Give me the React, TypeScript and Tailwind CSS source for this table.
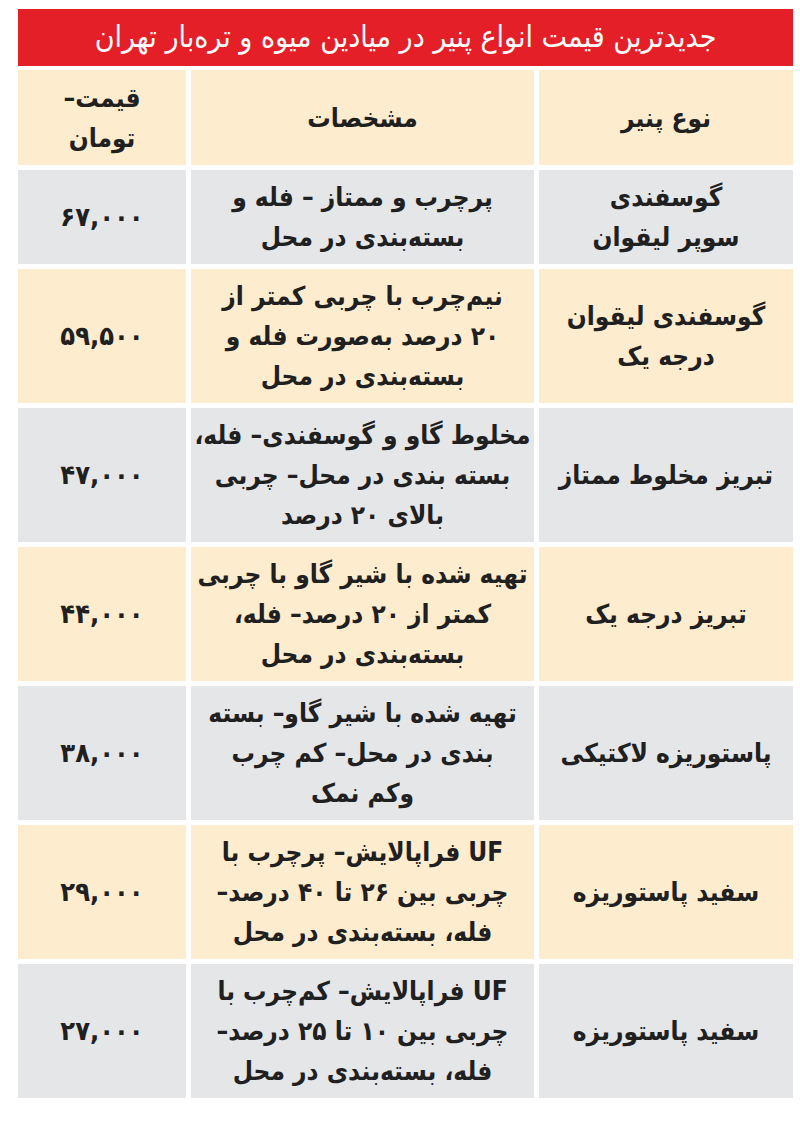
import React from "react";

type Row = {
  name: string[];
  desc: string[];
  price: string;
  tone: "gray" | "cream";
};

const rows: Row[] = [
  {
    name: ["گوسفندی", "سوپر لیقوان"],
    desc: ["پرچرب و ممتاز – فله و", "بسته‌بندی در محل"],
    price: "۶۷,۰۰۰",
    tone: "gray",
  },
  {
    name: ["گوسفندی لیقوان", "درجه یک"],
    desc: ["نیم‌چرب با چربی کمتر از", "۲۰ درصد به‌صورت فله و", "بسته‌بندی در محل"],
    price: "۵۹,۵۰۰",
    tone: "cream",
  },
  {
    name: ["تبریز مخلوط ممتاز"],
    desc: ["مخلوط گاو و گوسفندی– فله،", "بسته بندی در محل– چربی", "بالای ۲۰ درصد"],
    price: "۴۷,۰۰۰",
    tone: "gray",
  },
  {
    name: ["تبریز درجه یک"],
    desc: ["تهیه شده با شیر گاو با چربی", "کمتر از ۲۰ درصد– فله،", "بسته‌بندی در محل"],
    price: "۴۴,۰۰۰",
    tone: "cream",
  },
  {
    name: ["پاستوریزه لاکتیکی"],
    desc: ["تهیه شده با شیر گاو– بسته", "بندی در محل– کم چرب", "وکم نمک"],
    price: "۳۸,۰۰۰",
    tone: "gray",
  },
  {
    name: ["سفید پاستوریزه"],
    desc: ["UF فراپالایش– پرچرب با", "چربی بین ۲۶ تا ۴۰ درصد–", "فله، بسته‌بندی در محل"],
    price: "۲۹,۰۰۰",
    tone: "cream",
  },
  {
    name: ["سفید پاستوریزه"],
    desc: ["UF فراپالایش– کم‌چرب با", "چربی بین ۱۰ تا ۲۵ درصد–", "فله، بسته‌بندی در محل"],
    price: "۲۷,۰۰۰",
    tone: "gray",
  },
];

function Cell({
  lines,
  tone,
  className = "",
}: {
  lines: string[];
  tone: "gray" | "cream";
  className?: string;
}) {
  return (
    <div
      className={`flex flex-col items-center justify-center text-center ${
        tone === "gray" ? "bg-[#e5e6e8]" : "bg-[#fdecce]"
      } ${className}`}
    >
      {lines.map((l, i) => (
        <span key={i} className="block whitespace-nowrap leading-[40px]">
          {l}
        </span>
      ))}
    </div>
  );
}

export default function App() {
  return (
    <div
      dir="rtl"
      className="min-h-[1130px] bg-white pt-[9px] text-[#202020]"
      style={{ fontFamily: '"DejaVu Sans Condensed", "DejaVu Sans", sans-serif' }}
    >
      <div className="mr-[7px] w-[775px]">
        <div className="flex h-[57px] items-center justify-center bg-[#e51f27] pb-[2px] text-[30px] text-white">
          جدیدترین قیمت انواع پنیر در میادین میوه و تره‌بار تهران
        </div>

        <div className="mt-[4px] grid grid-cols-[254px_343px_168px] gap-x-[5px] gap-y-[5px] text-[26px] font-bold">
          <Cell lines={["نوع پنیر"]} tone="cream" className="h-[95px]" />
          <Cell lines={["مشخصات"]} tone="cream" className="h-[95px]" />
          <Cell lines={["قیمت–", "تومان"]} tone="cream" className="h-[95px]" />

          {rows.map((r, i) => (
            <React.Fragment key={i}>
              <Cell
                lines={r.name}
                tone={r.tone}
                className={i === 0 ? "h-[94px]" : "h-[134px]"}
              />
              <Cell lines={r.desc} tone={r.tone} className={i === 0 ? "h-[94px]" : "h-[134px]"} />
              <Cell
                lines={[r.price]}
                tone={r.tone}
                className={`tracking-[8px] text-[27px] ${i === 0 ? "h-[94px]" : "h-[134px]"}`}
              />
            </React.Fragment>
          ))}
        </div>
      </div>
    </div>
  );
}
